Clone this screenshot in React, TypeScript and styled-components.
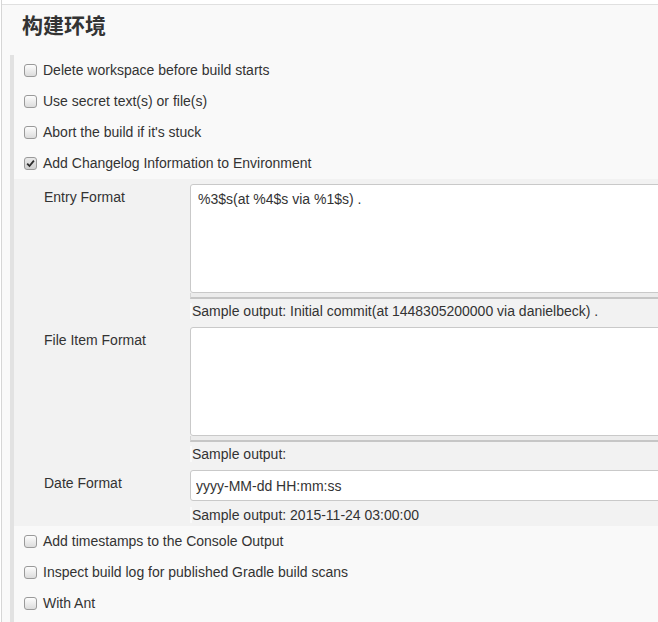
import styled, { createGlobalStyle } from 'styled-components';

const GlobalStyle = createGlobalStyle`
    html, body {
        margin: 0;
        padding: 0;
        background: #fff;
    }
    body {
        font-family: "Liberation Sans", Arial, sans-serif;
        font-size: 14px;
        color: #333;
    }
`;

const Page = styled.div`
    width: 657px;
    height: 622px;
    margin-left: 1px;
    border-left: 1px solid #d6d6d6;
    overflow: hidden;
`;

const Panel = styled.section`
    margin-top: 4px;
    padding-top: 7px;
    border-top: 1px solid #e0e0e0;
    background: #f9f9f9;
    min-height: 620px;
`;

const Title = styled.h2`
    margin: 0 0 15px;
    padding-left: 20px;
    font-family: "Liberation Sans", "Noto Sans CJK SC", sans-serif;
    font-size: 21px;
    line-height: 28px;
    font-weight: bold;
    color: #333;
`;

const Section = styled.div`
    margin-left: 8px;
    border-left: 4px solid #e2e2e2;
    padding-bottom: 4px;
`;

const Row = styled.label`
    display: flex;
    align-items: center;
    gap: 6px;
    height: 31px;
    padding-left: 10px;
    line-height: 17px;
`;

const Box = styled.span<{ $checked?: boolean }>`
    display: inline-flex;
    align-items: center;
    justify-content: center;
    box-sizing: border-box;
    width: 13px;
    height: 13px;
    border: 1px solid #9a9a9a;
    border-radius: 3px;
    background: linear-gradient(#fdfdfd, #dcdcdc);
    ${(p) => p.$checked && 'background: linear-gradient(#e9e9e9, #cfcfcf);'}
`;

const Nested = styled.div`
    display: grid;
    grid-template-columns: 146px 540px;
    padding: 5px 0 0 30px;
    background: #f2f2f2;
`;

const FieldLabel = styled.div`
    padding-top: 5px;
    line-height: 17px;
`;

const Field = styled.div`
    display: flex;
    flex-direction: column;
`;

const TextArea = styled.textarea`
    box-sizing: border-box;
    height: 109px;
    margin: 0;
    padding: 6px 7px;
    border: 1px solid #c9c9c9;
    border-radius: 3px;
    background: #fff;
    font-family: "Liberation Sans", Arial, sans-serif;
    font-size: 14px;
    line-height: 17px;
    color: #333;
    resize: none;
    outline: none;
`;

const Handle = styled.div`
    box-sizing: border-box;
    height: 6px;
    border: 1px solid #d6d6d6;
    border-top: none;
    border-bottom: 2px solid #c6c6c6;
    background: #ececec;
`;

const TextInput = styled.input`
    box-sizing: border-box;
    height: 31px;
    margin: 0;
    padding: 0 5px;
    border: 1px solid #c9c9c9;
    border-radius: 3px;
    background: #fff;
    font-family: "Liberation Sans", Arial, sans-serif;
    font-size: 14px;
    color: #333;
    outline: none;
`;

const Sample = styled.div<{ $compact?: boolean }>`
    padding: ${(p) => (p.$compact ? '6px 0 2px' : '4px 0 7px')};
    line-height: 17px;
    span {
        border-left: 2px solid #fafafa;
    }
`;

function Check({ checked, label }: { checked?: boolean; label: string }) {
    return (
        <Row>
            <Box $checked={checked}>
                {checked && (
                    <svg width="9" height="9" viewBox="0 0 9 9">
                        <path d="M1.2 4.6 L3.5 7 L7.9 1.6" fill="none" stroke="#2b2b2b" strokeWidth="1.8" />
                    </svg>
                )}
            </Box>
            {label}
        </Row>
    );
}

export default function App() {
    return (
        <Page>
            <GlobalStyle />
            <Panel>
                <Title>构建环境</Title>
                <Section>
                    <Check label="Delete workspace before build starts" />
                    <Check label="Use secret text(s) or file(s)" />
                    <Check label="Abort the build if it's stuck" />
                    <Check checked label="Add Changelog Information to Environment" />
                    <Nested>
                        <FieldLabel>Entry Format</FieldLabel>
                        <Field>
                            <TextArea readOnly value="%3$s(at %4$s via %1$s) ." />
                            <Handle />
                            <Sample>
                                <span>Sample output: Initial commit(at 1448305200000 via danielbeck) .</span>
                            </Sample>
                        </Field>
                        <FieldLabel>File Item Format</FieldLabel>
                        <Field>
                            <TextArea readOnly value="" />
                            <Handle />
                            <Sample>
                                <span>Sample output:</span>
                            </Sample>
                        </Field>
                        <FieldLabel>Date Format</FieldLabel>
                        <Field>
                            <TextInput readOnly value="yyyy-MM-dd HH:mm:ss" />
                            <Sample $compact>
                                <span>Sample output: 2015-11-24 03:00:00</span>
                            </Sample>
                        </Field>
                    </Nested>
                    <Check label="Add timestamps to the Console Output" />
                    <Check label="Inspect build log for published Gradle build scans" />
                    <Check label="With Ant" />
                </Section>
            </Panel>
        </Page>
    );
}
